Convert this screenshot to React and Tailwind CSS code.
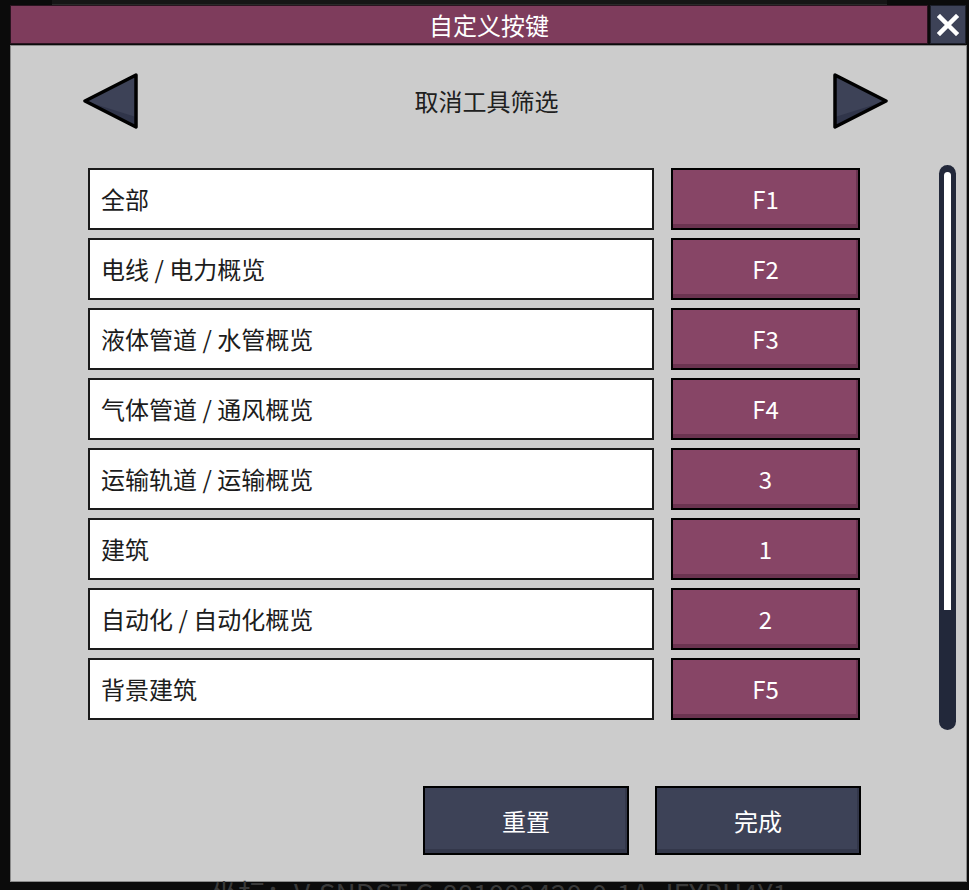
import React from 'react';

const bindings = [
  { label: '全部', key: 'F1' },
  { label: '电线 / 电力概览', key: 'F2' },
  { label: '液体管道 / 水管概览', key: 'F3' },
  { label: '气体管道 / 通风概览', key: 'F4' },
  { label: '运输轨道 / 运输概览', key: '3' },
  { label: '建筑', key: '1' },
  { label: '自动化 / 自动化概览', key: '2' },
  { label: '背景建筑', key: 'F5' },
];

const font = { fontFamily: '"Noto Sans CJK SC", "Noto Sans", sans-serif' };

function Arrow({ dir }) {
  // triangle pointing left or right, with a darker band along the lower edge
  const left = dir === 'left';
  return (
    <svg width="56" height="56" viewBox="0 0 56 56" className="shrink-0">
      <g transform={left ? '' : 'translate(56 0) scale(-1 1)'}>
        <polygon points="53,2 2,28 53,54" fill="#3d4257" />
        <polygon points="2,28 53,44 53,54" fill="#30354a" />
        <polygon
          points="53,2 2,28 53,54"
          fill="none"
          stroke="#000"
          strokeWidth="3.5"
          strokeLinejoin="round"
        />
      </g>
    </svg>
  );
}

function KeyRow({ label, keyName }) {
  return (
    <div className="flex gap-[17px] h-[62px]">
      <div className="w-[566px] bg-white border-2 border-[#1a1a1a] flex items-center pl-[11px] text-[24px] text-[#1c1c1c]">
        {label}
      </div>
      <div className="w-[189px] bg-[#874566] border-2 border-black shadow-[inset_-2px_-4px_0_#6c3451] flex items-center justify-center text-[24px] text-white">
        {keyName}
      </div>
    </div>
  );
}

export default function App() {
  return (
    <div className="w-[969px] h-[890px] bg-[#0b0b0b] overflow-hidden" style={font}>
      <div className="h-[5px] mx-[52px] w-[835px] bg-[#161616] border-b border-[#2a2a2a]" />

      {/* header */}
      <div className="flex h-[39px] pl-[10px] pr-[3px] gap-[2px]">
        <div className="flex-1 bg-[#7e3c5c] border border-[#2a1420] flex items-center justify-center pl-[40px] text-[24px] text-white">
          自定义按键
        </div>
        <div className="w-[36px] bg-[#3d4257] border border-[#1c1f2a] flex items-center justify-center">
          <svg width="22" height="22" viewBox="0 0 22 22">
            <path d="M3 3 L19 19 M19 3 L3 19" stroke="#fff" strokeWidth="4.5" strokeLinecap="square" />
          </svg>
        </div>
      </div>

      {/* panel */}
      <div className="ml-[10px] w-[957px] h-[837px] mt-px bg-[#cccccc] border border-[#8a8a8a] flex flex-col">
        <div className="flex items-center mt-[27px] h-[56px] pl-[72px] pr-[78px]">
          <Arrow dir="left" />
          <div className="flex-1 text-center pl-[2px] text-[24px] leading-none text-[#202020]">取消工具筛选</div>
          <Arrow dir="right" />
        </div>

        <div className="flex mt-[36px]">
          <div className="ml-[77px] mt-[3px] flex flex-col gap-[8px]">
            {bindings.map((b) => (
              <KeyRow key={b.label} label={b.label} keyName={b.key} />
            ))}
          </div>
          <div className="ml-[79px] w-[17px] h-[565px] bg-[#22283a] rounded-full px-[5px] pt-[7px]">
            <div className="h-[438px] bg-white rounded-t-full" />
          </div>
        </div>

        <div className="flex gap-[26px] mt-[56px] ml-[412px]">
          <button className="w-[206px] h-[69px] bg-[#3d4257] border-2 border-black shadow-[inset_-2px_-4px_0_#33374a] text-white text-[24px]">
            重置
          </button>
          <button className="w-[206px] h-[69px] bg-[#3d4257] border-2 border-black shadow-[inset_-2px_-4px_0_#33374a] text-white text-[24px]">
            完成
          </button>
        </div>
      </div>

      {/* status line behind the dialog */}
      <div className="ml-[210px] mt-[-3px] text-[28px] leading-none text-[#3a3a3a] whitespace-nowrap">
        坐标：V-SNDST-C-881002420-0-1A-JFXPU4Y1
      </div>
    </div>
  );
}
